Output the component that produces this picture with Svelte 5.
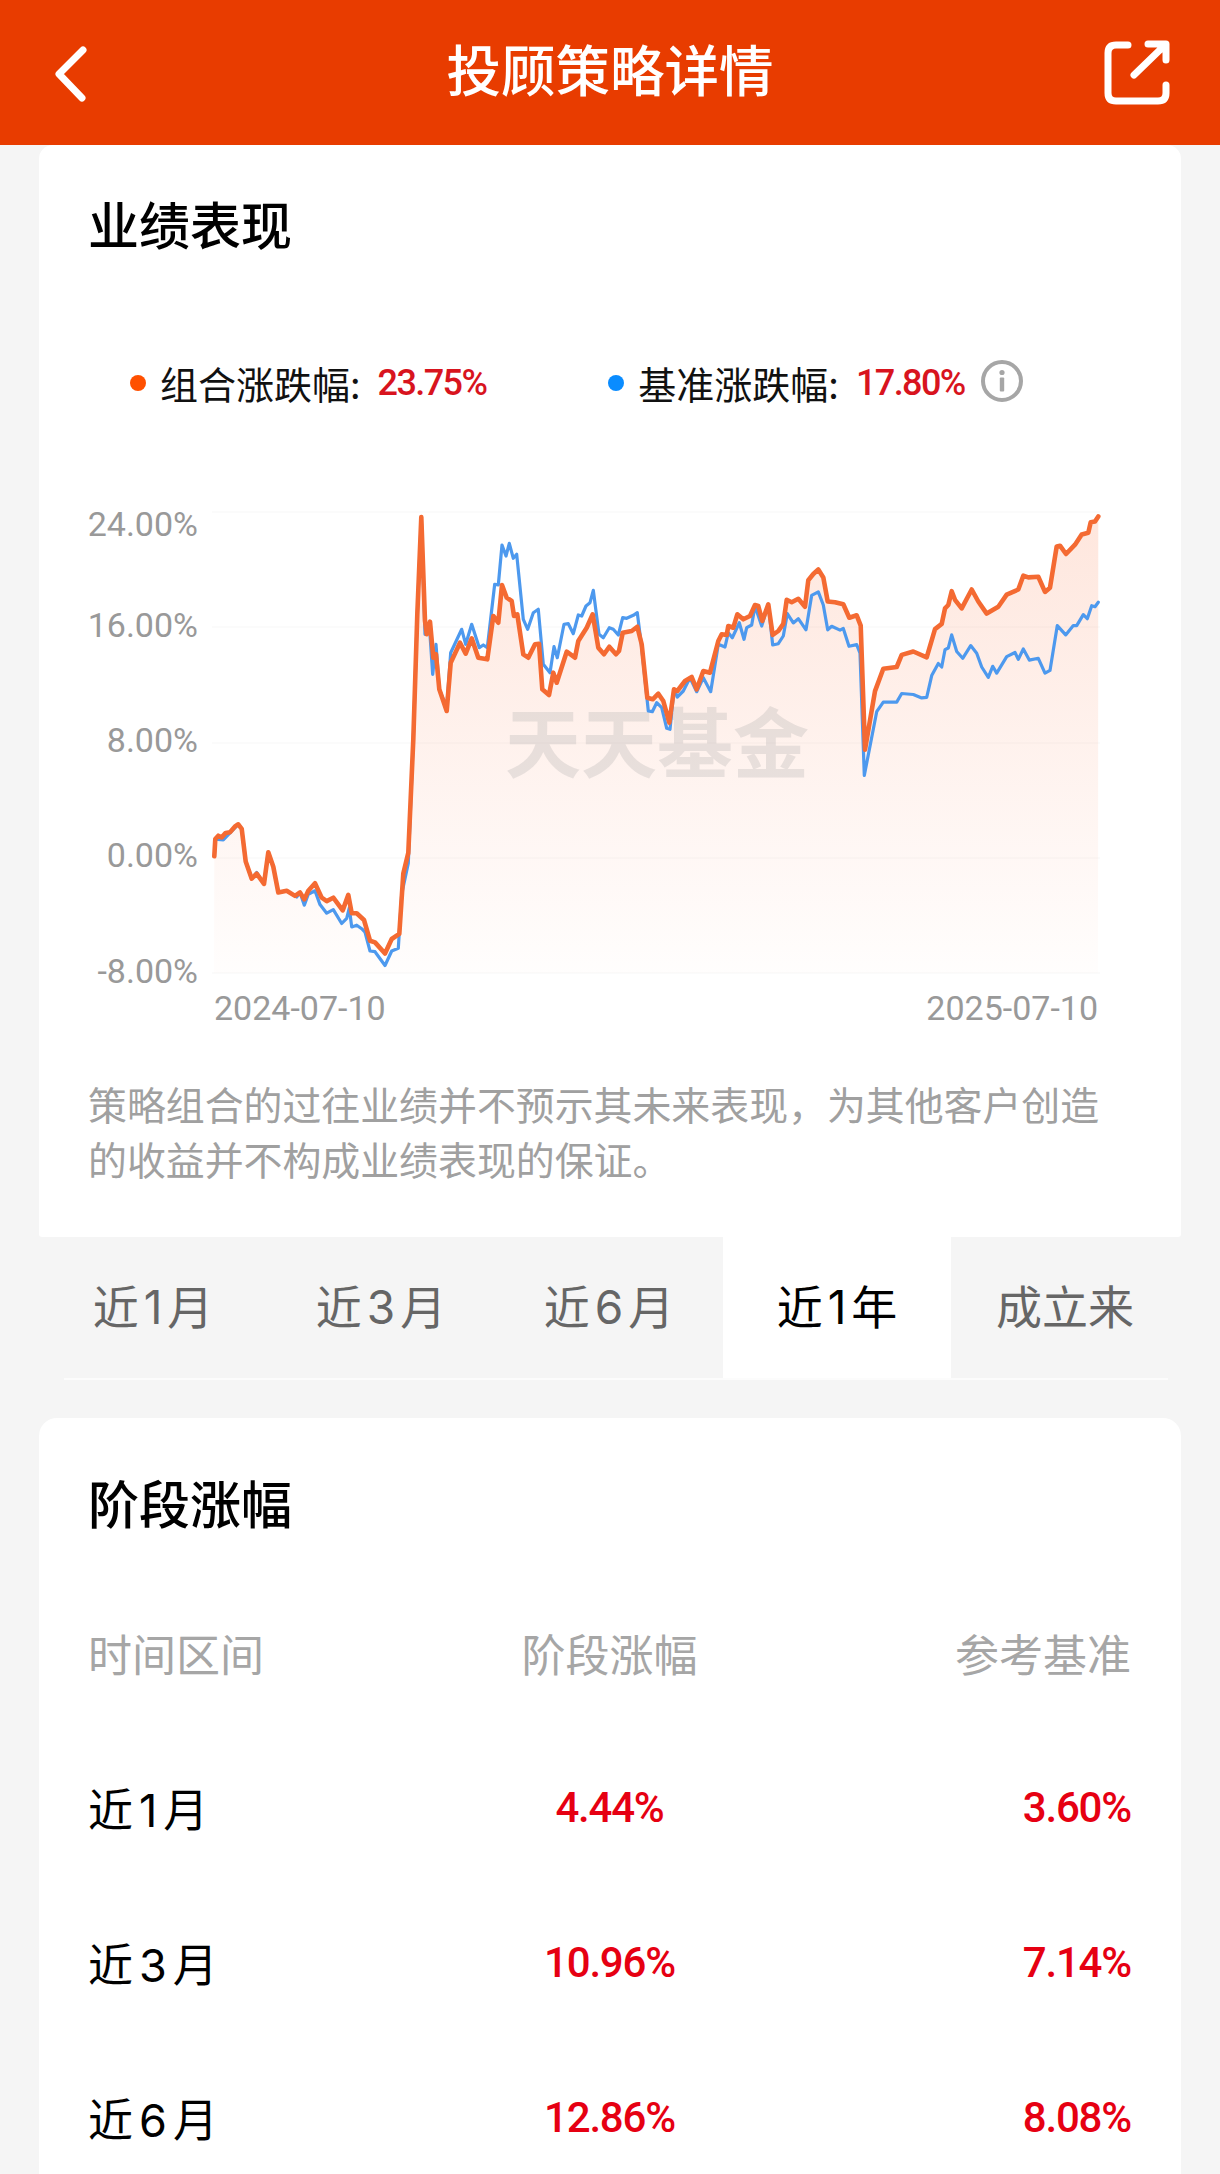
<script>
  // Chart traces read from the reference, grouped by crop: [x origin, y scale]
  const map = (pts, ox, sy) => pts.map(([x, y]) => [ox + x / 3, 480 + y / sy]);
  const orange = [
    ...map([[463,1090],[466,1040],[475,1030],[485,1035],[497,1022],[510,1020],[525,1003],[535,997],[545,1010],[557,1105],[575,1155],[590,1140],[612,1170],[625,1078],[640,1120],[655,1195],[680,1190],[705,1205],[720,1195],[733,1215],[745,1190],[765,1168],[785,1210],[800,1220],[820,1210],[848,1247],[865,1202],[875,1255],[890,1255],[912,1275],[930,1335],[945,1340],[975,1372],[995,1330],[1018,1315],[1030,1140],[1045,1080],[1060,750]], 60, 2.904),
    ...map([[52,400],[64,108],[75,420],[80,460],[90,422],[100,530],[108,520],[118,625],[140,690],[152,545],[180,485],[197,518],[215,472],[235,530],[262,535],[280,405],[295,425],[306,312],[320,350],[335,360],[342,405],[352,400],[370,520],[385,530],[405,490],[417,488],[427,625],[447,642],[460,575],[470,605],[500,512],[525,530],[535,480],[560,440],[578,400],[595,500],[612,520],[628,497],[648,520],[657,510],[668,455],[695,450],[712,437],[725,490],[742,650],[758,655],[775,638],[790,660],[808,725],[822,625],[832,630],[855,600],[875,588],[890,625],[910,570],[930,575],[955,480],[965,460],[980,462],[985,435],[1000,440],[1012,400],[1030,415],[1050,405],[1065,372],[1075,375],[1087,420],[1105,370],[1118,462],[1135,450]], 400, 3),
    ...map([[10,415],[20,345],[35,352],[55,342],[75,365],[85,288],[100,270],[115,257],[130,280],[143,350],[165,352],[190,358],[208,397],[230,390],[242,420],[255,780],[285,610],[310,545],[350,540],[365,505],[400,495],[440,512],[465,430],[485,415],[495,370],[505,360],[515,320],[525,345],[545,370],[575,315],[595,350],[620,385],[655,365],[680,330],[715,315],[730,275],[745,280],[775,278],[795,322],[810,310],[830,190],[840,188],[858,212],[885,185],[905,155],[925,150],[932,120],[945,118],[955,103]], 780, 2.904)
  ];
  const blue = [
    ...map([[463,1090],[466,1040],[490,1042],[510,1022],[535,997],[545,1010],[557,1105],[575,1155],[590,1137],[612,1170],[625,1078],[640,1120],[655,1195],[680,1190],[710,1208],[720,1195],[733,1232],[745,1200],[765,1190],[780,1230],[800,1255],[820,1245],[845,1285],[860,1270],[868,1240],[875,1295],[890,1290],[905,1300],[915,1310],[930,1365],[945,1367],[975,1407],[995,1365],[1015,1357],[1025,1200],[1045,1110],[1060,750]], 60, 2.904),
    ...map([[52,400],[64,108],[75,460],[88,430],[98,580],[108,490],[118,625],[140,680],[152,515],[185,445],[197,490],[215,430],[238,500],[250,492],[262,500],[284,310],[295,312],[306,192],[318,225],[328,187],[340,232],[350,220],[370,415],[383,445],[400,395],[415,385],[430,550],[450,575],[462,497],[472,530],[492,430],[505,428],[520,458],[535,402],[545,405],[558,375],[570,365],[580,328],[597,460],[610,470],[628,440],[640,445],[655,462],[668,410],[680,412],[700,403],[712,395],[725,500],[745,690],[757,692],[770,665],[785,680],[800,742],[810,745],[822,625],[832,648],[850,630],[870,590],[890,632],[910,590],[932,632],[955,490],[975,498],[985,455],[997,470],[1018,425],[1032,475],[1040,440],[1055,432],[1065,375],[1085,435],[1105,370],[1118,492],[1135,488]], 400, 3),
    ...map([[10,450],[22,385],[40,412],[55,400],[78,432],[95,332],[115,322],[130,360],[143,432],[155,422],[180,433],[190,428],[207,480],[230,475],[240,500],[253,855],[290,670],[310,642],[350,642],[365,617],[400,620],[425,630],[440,628],[455,565],[475,530],[485,540],[495,490],[505,485],[515,447],[530,495],[548,515],[572,478],[590,500],[605,540],[625,570],[638,538],[650,558],[680,510],[705,498],[715,518],[730,488],[748,520],[775,515],[795,558],[810,550],[832,420],[857,447],[880,420],[890,420],[910,388],[922,400],[935,362],[945,365],[955,352]], 780, 2.904)
  ];
  const line = (pts) => pts.map(([x, y]) => `${x.toFixed(1)},${y.toFixed(1)}`).join(' ');
  const orangeLine = line(orange);
  const blueLine = line(blue);
  const area = `${orangeLine} 1098,972 214,972`;
  const grid = [511, 626, 742, 857, 972];
  const yLabels = [['24.00%', 535], ['16.00%', 636], ['8.00%', 751], ['0.00%', 866], ['-8.00%', 982]];
  const tabs = [['近', '1', '月'], ['近', '3', '月'], ['近', '6', '月'], ['近', '1', '年'], ['成立来', '', '']];
  const rows = [
    [['近', '1', '月'], '4.44%', '3.60%'],
    [['近', '3', '月'], '10.96%', '7.14%'],
    [['近', '6', '月'], '12.86%', '8.08%']
  ];
</script>

<div class="page">
  <header class="bar">
    <svg class="icon" width="100" height="145" viewBox="0 0 100 145" aria-hidden="true">
      <path d="M83 50 L59 74 L82 98" />
    </svg>
    <h1>投顾策略详情</h1>
    <svg class="icon" width="100" height="145" viewBox="1090 0 100 145" aria-hidden="true">
      <path d="M1128 45 H1116 Q1108 45 1108 53 V93 Q1108 101 1116 101 H1158 Q1166 101 1166 93 V85" />
      <path d="M1134 75 L1165 45 M1148 44 H1166 V60" />
    </svg>
  </header>

  <section class="card perf">
    <h2>业绩表现</h2>
    <div class="legend">
      <span class="dot orange"></span>
      <span class="leg-label">组合涨跌幅:</span>
      <span class="leg-num n1">23.75%</span>
      <span class="dot blue"></span>
      <span class="leg-label">基准涨跌幅:</span>
      <span class="leg-num">17.80%</span>
      <svg class="info" width="42" height="42" viewBox="0 0 42 42" aria-hidden="true">
        <circle cx="21" cy="21" r="19" />
        <circle class="fill" cx="21" cy="12.5" r="2.6" />
        <rect class="fill" x="18.8" y="17.5" width="4.4" height="14" rx="1" />
      </svg>
    </div>

    <svg class="chart" width="1142" height="620" viewBox="39 420 1142 620" role="img" aria-label="业绩走势图">
      <defs>
        <linearGradient id="fade" x1="0" y1="0" x2="0" y2="1">
          <stop offset="0" stop-color="#fa5a1e" stop-opacity="0.15" />
          <stop offset="1" stop-color="#fa5a1e" stop-opacity="0.01" />
        </linearGradient>
      </defs>
      {#each grid as y}
        <line class="gridline" x1="212" x2="1100" y1={y} y2={y} />
      {/each}
      <polygon points={area} fill="url(#fade)" />
      <text class="mark" x="505" y="771">天天基金</text>
      <polyline class="trace b" points={blueLine} />
      <polyline class="trace o" points={orangeLine} />
      {#each yLabels as [t, y]}
        <text class="axis" x="198" y={y} text-anchor="end">{t}</text>
      {/each}
      <text class="axis" x="214" y="1019">2024-07-10</text>
      <text class="axis" x="1098" y="1019" text-anchor="end">2025-07-10</text>
    </svg>

    <p class="note">策略组合的过往业绩并不预示其未来表现，为其他客户创造的收益并不构成业绩表现的保证。</p>
  </section>

  <nav class="tabs">
    {#each tabs as [a, d, b], i}
      <div class="tab" class:active={i === 3}>{a}{#if d}<span class="digit">{d}</span>{/if}{b}</div>
    {/each}
  </nav>

  <section class="card stage">
    <h2>阶段涨幅</h2>
    <div class="row head">
      <span>时间区间</span><span class="c">阶段涨幅</span><span class="r">参考基准</span>
    </div>
    {#each rows as [[a, d, m], x, y]}
      <div class="row">
        <span class="name">{a}<span class="digit wide">{d}</span>{m}</span><span class="c num">{x}</span><span class="r num">{y}</span>
      </div>
    {/each}
  </section>
</div>

<style>
  :global(body) {
    margin: 0;
    background: #f5f5f5;
  }
  .page {
    width: 1220px;
    height: 2174px;
    overflow: hidden;
    background: #f5f5f5;
    font-family: "Noto Sans CJK SC", "Noto Sans", sans-serif;
    color: #000;
  }
  .bar {
    height: 145px;
    background: #e83c00;
    display: grid;
    grid-template-columns: 130px 1fr 130px;
    align-items: center;
  }
  .bar h1 {
    margin: 0 0 10px;
    font-size: 54.5px;
    line-height: 135px;
    font-weight: 500;
    color: #fff;
    text-align: center;
  }
  .icon {
    display: block;
  }
  .icon path {
    fill: none;
    stroke: #fff;
    stroke-width: 7;
    stroke-linecap: round;
    stroke-linejoin: round;
  }
  .card {
    margin: 0 39px;
    background: #fff;
    box-sizing: border-box;
  }
  .perf {
    height: 1092px;
    border-radius: 14px 14px 3px 3px;
    padding-top: 42px;
  }
  h2 {
    margin: 0;
    padding-left: 49px;
    font-size: 51px;
    line-height: 72px;
    font-weight: 500;
  }
  .legend {
    height: 60px;
    margin-top: 94px;
    display: flex;
    align-items: center;
    padding-left: 91px;
  }
  .dot {
    width: 16px;
    height: 16px;
    border-radius: 50%;
    margin-right: 14px;
    flex: none;
  }
  .dot.orange { background: #ff5000; }
  .dot.blue { background: #0a8cff; }
  .leg-label {
    font-size: 38px;
    line-height: 60px;
    color: #111;
    margin-right: 17px;
  }
  .leg-num {
    font-family: Roboto, sans-serif;
    font-size: 36px;
    font-weight: 500;
    color: #d8141e;
    letter-spacing: -1.6px;
    line-height: 60px;
  }
  .n1 { margin-right: 122px; }
  .info {
    margin-left: 16px;
    margin-top: -4px;
  }
  .info circle {
    fill: none;
    stroke: #a6a6a6;
    stroke-width: 4;
  }
  .info .fill {
    fill: #a6a6a6;
    stroke: none;
  }
  .chart {
    display: block;
    margin-top: 8px;
  }
  .gridline {
    stroke: #fbfbfb;
    stroke-width: 2;
  }
  .trace {
    fill: none;
    stroke-linejoin: round;
    stroke-linecap: round;
  }
  .trace.b { stroke: #4d99ee; stroke-width: 3.2; }
  .trace.o { stroke: #f46a32; stroke-width: 4.6; }
  .mark {
    font-size: 76px;
    font-weight: 700;
    fill: #a9a9a9;
    fill-opacity: 0.27;
  }
  .axis {
    font-family: Roboto, sans-serif;
    font-size: 34px;
    fill: #999;
  }
  .note {
    margin: 35px 0 0;
    padding: 0 68px 0 49px;
    font-size: 38.9px;
    line-height: 55px;
    color: #a0a0a0;
  }
  .tabs {
    margin: 0 39px;
    height: 141px;
    display: grid;
    grid-template-columns: repeat(5, 228px);
    position: relative;
  }
  .tabs::after {
    content: "";
    position: absolute;
    left: 25px;
    right: 13px;
    bottom: -2px;
    height: 2px;
    background: #fcfcfc;
  }
  .tab {
    font-size: 46px;
    line-height: 141px;
    text-align: center;
    color: #666;
    font-family: Inter, "Noto Sans CJK SC", sans-serif;
  }
  .tab.active {
    background: #fff;
    color: #000;
  }
  .digit {
    margin: 0 5px;
  }
  .digit.wide {
    margin: 0 6px;
  }
  .stage {
    margin-top: 40px;
    height: 800px;
    border-radius: 18px 18px 0 0;
    padding-top: 48px;
  }
  .row {
    height: 155px;
    display: grid;
    grid-template-columns: 1fr 1fr 1fr;
    align-items: center;
    padding: 0 50px 0 49px;
    font-size: 44px;
  }
  .row.head {
    margin-top: 37px;
    color: #a6a6a6;
    height: 155px;
  }
  .c { text-align: center; }
  .r { text-align: right; }
  .name {
    font-family: Inter, "Noto Sans CJK SC", sans-serif;
    font-size: 45px;
  }
  .num {
    font-family: Roboto, sans-serif;
    font-size: 42px;
    font-weight: 500;
    color: #e60012;
    letter-spacing: -1.2px;
  }
</style>
